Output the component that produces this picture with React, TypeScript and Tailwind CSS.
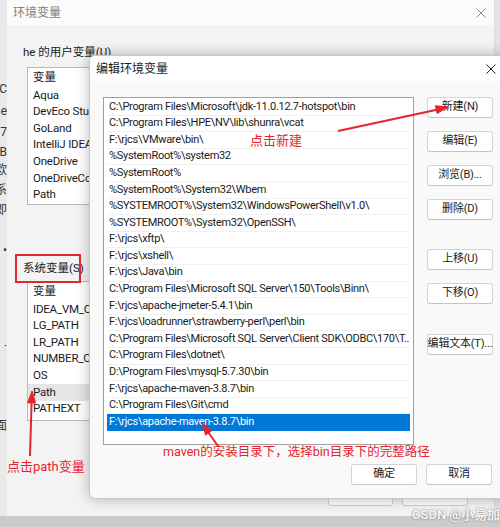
import React from 'react';

const font = 'font-["Roboto","Noto_Sans_CJK_SC",sans-serif]';

const paths = [
  'C:\\Program Files\\Microsoft\\jdk-11.0.12.7-hotspot\\bin',
  'C:\\Program Files\\HPE\\NV\\lib\\shunra\\vcat',
  'F:\\rjcs\\VMware\\bin\\',
  '%SystemRoot%\\system32',
  '%SystemRoot%',
  '%SystemRoot%\\System32\\Wbem',
  '%SYSTEMROOT%\\System32\\WindowsPowerShell\\v1.0\\',
  '%SYSTEMROOT%\\System32\\OpenSSH\\',
  'F:\\rjcs\\xftp\\',
  'F:\\rjcs\\xshell\\',
  'F:\\rjcs\\Java\\bin',
  'C:\\Program Files\\Microsoft SQL Server\\150\\Tools\\Binn\\',
  'F:\\rjcs\\apache-jmeter-5.4.1\\bin',
  'F:\\rjcs\\loadrunner\\strawberry-perl\\perl\\bin',
  'C:\\Program Files\\Microsoft SQL Server\\Client SDK\\ODBC\\170\\T...',
  'C:\\Program Files\\dotnet\\',
  'D:\\Program Files\\mysql-5.7.30\\bin',
  'F:\\rjcs\\apache-maven-3.8.7\\bin',
  'C:\\Program Files\\Git\\cmd',
  'F:\\rjcs\\apache-maven-3.8.7\\bin',
];

const userVars = ['Aqua', 'DevEco Studio', 'GoLand', 'IntelliJ IDEA', 'OneDrive', 'OneDriveConsumer', 'Path'];
const sysVars = ['IDEA_VM_OPTIONS', 'LG_PATH', 'LR_PATH', 'NUMBER_OF_PROCESSORS', 'OS', 'Path', 'PATHEXT'];

const sideChars = [
  { t: 'TC', cls: 'mt-[80px]' },
  { t: 'ne', cls: 'mt-[4px]' },
  { t: '37', cls: 'mt-[3px]' },
  { t: 'B', cls: 'mt-[2px]' },
  { t: '欧', cls: 'mt-[0px]' },
  { t: '系', cls: 'mt-[2px]' },
  { t: '即', cls: 'mt-[2px]' },
  { t: '•', cls: 'mt-[22px] text-[#2a6fd0]' },
  { t: '·', cls: 'mt-[78px]' },
  { t: '面', cls: 'mt-[62px]' },
];

const Close = ({ color }: { color: string }) => (
  <svg width="10" height="10" viewBox="0 0 10 10">
    <path d="M0.5 0.5L9.5 9.5M9.5 0.5L0.5 9.5" stroke={color} strokeWidth="1" />
  </svg>
);

const Btn = ({ label, cls }: { label: string; cls?: string }) => (
  <div
    className={`w-[66px] h-[21px] flex items-center justify-center bg-white border border-[#d4d4d4] border-b-[#c4c4c4] rounded-[3px] text-[11px] tracking-[-0.2px] text-[#1a1a1a] whitespace-nowrap ${cls ?? ''}`}
  >
    {label}
  </div>
);

const VarList = ({ items, selected, cls }: { items: string[]; selected?: number; cls: string }) => (
  <div className={`ml-[20px] w-[470px] bg-white border border-[#b9b9b9] flex flex-col ${cls}`}>
    <div className="h-[19px] pl-[5px] flex items-center text-[11.5px] text-[#1a1a1a]">变量</div>
    {items.map((v, i) => (
      <div
        key={v}
        className={`h-[16.6px] pl-[5px] flex items-center text-[11.5px] tracking-[-0.2px] text-[#1a1a1a] whitespace-nowrap ${i === selected ? 'bg-[#e6e6e6]' : ''}`}
      >
        {v}
      </div>
    ))}
  </div>
);

export default function App() {
  return (
    <div className={`relative w-[500px] h-[527px] overflow-hidden bg-[#cbcbcb] ${font}`}>
      <div className="flex h-[516px]">
        {/* window behind, only its right edge shows */}
        <div className="w-[7px] bg-[#e9e9e9] flex flex-col overflow-hidden">
          {sideChars.map((c, i) => (
            <div key={i} className={`h-[18px] flex justify-end items-center text-[12px] text-[#333] whitespace-nowrap ${c.cls}`}>
              {c.t}
            </div>
          ))}
        </div>

        {/* 环境变量 */}
        <div className="w-[488px] flex flex-col bg-[#f3f3f3] border-r border-[#dcdcdc]">
          <div className="h-[25px] shrink-0 bg-[#fbfbfb] flex items-center justify-between pl-[6px] pr-[8px]">
            <span className="text-[12px] text-[#808080]">环境变量</span>
            <Close color="#8a8a8a" />
          </div>
          <div className="flex flex-col">
            <div className="mt-[20px] ml-[16px] h-[16px] flex items-center text-[11.5px] text-[#1a1a1a]">he 的用户变量(U)</div>
            <VarList items={userVars} cls="mt-[6px] h-[138px]" />
            <div className="mt-[56px] ml-[16px] h-[16px] flex items-center text-[11.5px] text-[#1a1a1a]">系统变量(S)</div>
            <VarList items={sysVars} selected={5} cls="mt-[4px] h-[140px]" />
            <div className="mt-[64px] ml-[321px] flex gap-[9px]">
              <div className="w-[65px] h-[21px] bg-[#fdfdfd] border border-[#d0d0d0] rounded-[3px]" />
              <div className="w-[66px] h-[21px] bg-[#fdfdfd] border border-[#d0d0d0] rounded-[3px]" />
            </div>
          </div>
        </div>
        <div className="flex-1 bg-[#e4e4e4]" />
      </div>

      {/* 编辑环境变量 dialog */}
      <div className="absolute left-[89px] top-[55px] w-[418px] h-[444px] bg-[#f9f9f9] border border-[#c8c8c8] rounded-[6px] shadow-[0_0_14px_rgba(0,0,0,0.28)] flex flex-col overflow-hidden">
        <div className="h-[25px] shrink-0 bg-white flex items-center justify-between pl-[6px] pr-[10px]">
          <span className="text-[12px] text-[#1a1a1a]">编辑环境变量</span>
          <Close color="#222" />
        </div>
        <div className="flex flex-col pl-[13px]">
          <div className="flex mt-[16px] gap-[13px]">
            <div className="w-[311px] h-[348px] bg-white border border-[#9f9f9f] flex flex-col pt-[1px] px-[3px]">
              {paths.map((p, i) => (
                <div
                  key={i}
                  className={`h-[16.6px] shrink-0 pl-[2px] flex items-center text-[11px] tracking-[-0.3px] whitespace-nowrap overflow-hidden border-b ${
                    i === paths.length - 1 ? 'bg-[#0078d7] text-white border-[#0078d7]' : 'text-[#1a1a1a] border-[#f1f1f1]'
                  }`}
                >
                  {p}
                </div>
              ))}
            </div>
            <div className="flex flex-col">
              <Btn label="新建(N)" />
              <Btn label="编辑(E)" cls="mt-[13px]" />
              <Btn label="浏览(B)..." cls="mt-[13px]" />
              <Btn label="删除(D)" cls="mt-[13px]" />
              <Btn label="上移(U)" cls="mt-[29px]" />
              <Btn label="下移(O)" cls="mt-[13px]" />
              <Btn label="编辑文本(T)..." cls="mt-[30px]" />
            </div>
          </div>
          <div className="mt-[19px] ml-[248px] flex gap-[9px]">
            <Btn label="确定" />
            <Btn label="取消" />
          </div>
        </div>
      </div>

      {/* annotations */}
      <div className="absolute left-[15px] top-[254px] w-[66px] h-[29px] border-2 border-[#e3262b]" />
      <div className="absolute left-[250px] top-[134px] text-[13px] text-[#e3262b] leading-none">点击新建</div>
      <div className="absolute left-[7px] top-[460px] text-[13px] text-[#e3262b] leading-none">点击path变量</div>
      <div className="absolute left-[163px] top-[446px] text-[12.5px] text-[#e3262b] leading-none whitespace-nowrap">
        maven的安装目录下，选择bin目录下的完整路径
      </div>
      <svg className="absolute left-0 top-0 pointer-events-none" width="500" height="527" viewBox="0 0 500 527">
        <g fill="#e3262b" stroke="#e3262b">
          <line x1="338" y1="131" x2="438" y2="109.5" strokeWidth="2" />
          <polygon points="448,107 437.2,113.5 435.4,105.7" strokeWidth="1" />
          <line x1="218" y1="446" x2="208" y2="432" strokeWidth="2" />
          <polygon points="202,423 212.1,430.6 205.6,435.1" strokeWidth="1" />
          <line x1="30" y1="456" x2="31.6" y2="402" strokeWidth="2" />
          <polygon points="32,391 35.6,403.1 27.6,402.9" strokeWidth="1" />
        </g>
      </svg>
      <div className="absolute left-[412px] top-[505px] text-[13px] font-bold text-white/90 [text-shadow:0_0_2px_#666] whitespace-nowrap">
        CSDN @小易加
      </div>
    </div>
  );
}
